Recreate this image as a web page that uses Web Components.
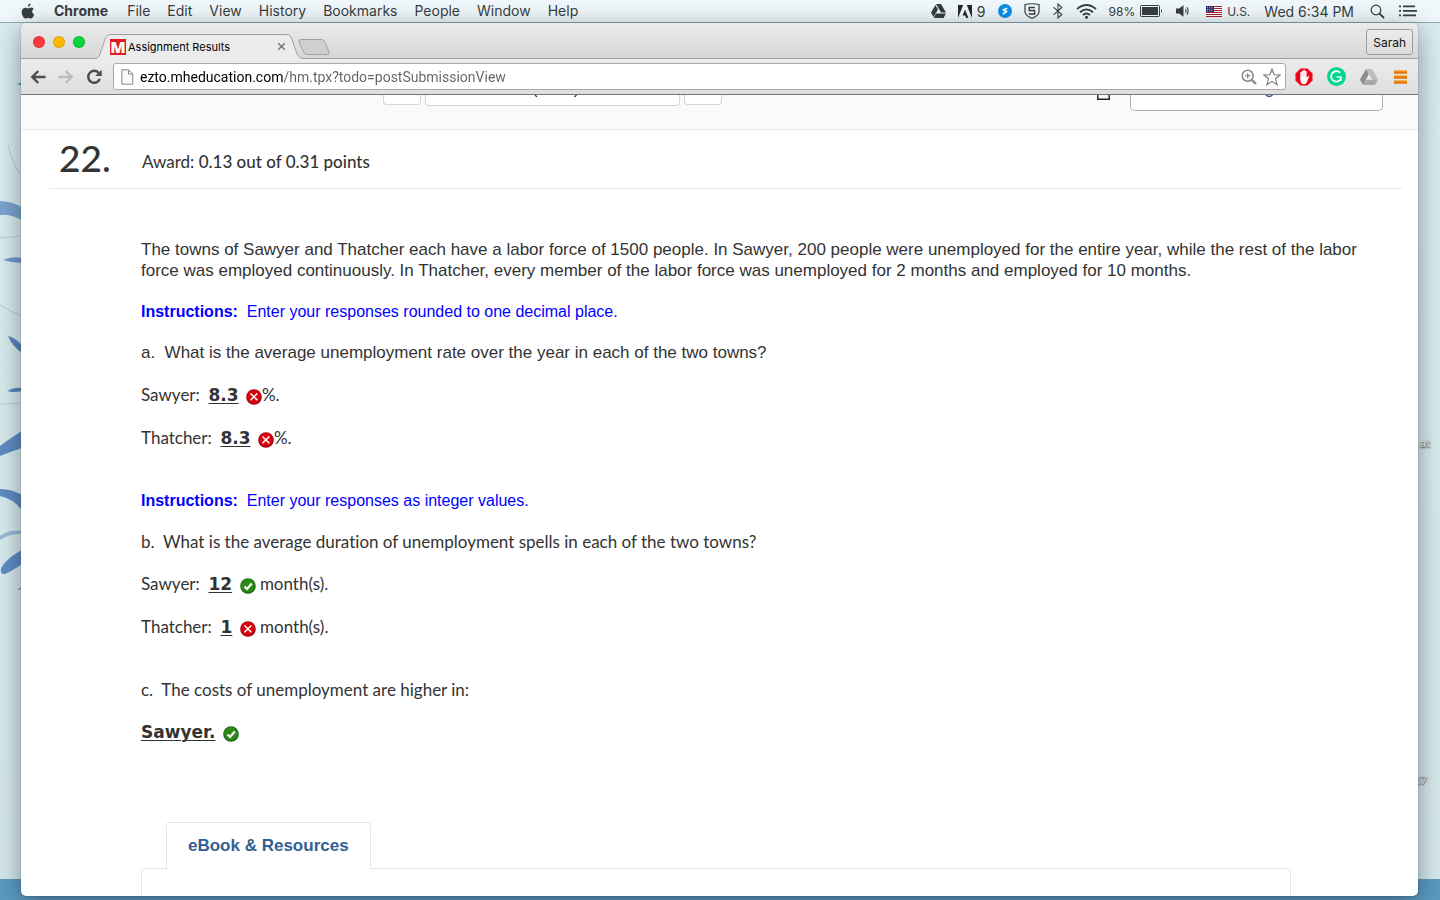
<!DOCTYPE html>
<html lang="en">
<head>
<meta charset="utf-8">
<title>Assignment Results</title>
<style>
  html, body {
    height: 100%;
    margin: 0;
  }
  body {
    overflow: hidden;
    font-family: Inter, Roboto, sans-serif;
    font-size: 14px;
    color: #2b2b2b;
  }
</style>
</head>
<body>
<desk-top>
  <menu-bar slot="menu"></menu-bar>
  <browser-window>
    <tab-strip slot="tabs" user="Sarah">Assignment Results</tab-strip>
    <tool-bar slot="toolbar" url="ezto.mheducation.com/hm.tpx?todo=postSubmissionView"></tool-bar>
    <page-header></page-header>
    <question-card number="22." points="0.13 out of 0.31 points">
      <question-text face="arial">The towns of Sawyer and Thatcher each have a labor force of 1500 people. In Sawyer, 200 people were unemployed for the entire year, while the rest of the labor force was employed continuously. In Thatcher, every member of the labor force was unemployed for 2 months and employed for 10 months.</question-text>
      <question-hint>Enter your responses rounded to one decimal place.</question-hint>
      <question-text face="arial">a.&nbsp; What is the average unemployment rate over the year in each of the two towns?</question-text>
      <answer-line label="Sawyer:" value="8.3" state="wrong">%.</answer-line>
      <answer-line label="Thatcher:" value="8.3" state="wrong" last>%.</answer-line>
      <question-hint>Enter your responses as integer values.</question-hint>
      <question-text>b.&nbsp; What is the average duration of unemployment spells in each of the two towns?</question-text>
      <answer-line label="Sawyer:" value="12" state="right">&nbsp;month(s).</answer-line>
      <answer-line label="Thatcher:" value="1" state="wrong" last>&nbsp;month(s).</answer-line>
      <question-text>c.&nbsp; The costs of unemployment are higher in:</question-text>
      <answer-line value="Sawyer." state="right"></answer-line>
    </question-card>
    <resource-tabs>eBook &amp; Resources</resource-tabs>
  </browser-window>
</desk-top>

<script>
class BaseElement extends HTMLElement {
  constructor() {
    super();
    this.shadow = this.attachShadow({ mode: 'open' });
  }

  connectedCallback() {
    const template = document.createElement('template');
    template.innerHTML = this.markup();
    this.shadow.appendChild(template.content.cloneNode(true));
  }
}

class DeskTop extends BaseElement {
  markup() {
    return `
    <style>
    :host{
        display: flex;
        flex-direction: column;
        height: 100vh;
        position: relative;
        overflow: hidden;
        background: linear-gradient(#d9eef0, #d5e8eb);
    }
    .wallpaper{
        position: absolute;
        left: 0;
        top: 0;
        width: 22px;
        height: 900px;
    }
    .sea{
        position: absolute;
        left: 0;
        right: 0;
        bottom: 0;
        height: 21px;
        background: #5b9bc1;
    }
    .label{
        position: absolute;
        left: calc(100% - 20px);
        font-size: 11px;
        line-height: 14px;
        font-weight: 600;
        color: #dedede;
        text-shadow: 0 1px 2px #444;
    }
    .at{ top: 436px; }
    .num{ top: 773px; left: calc(100% - 24px); }
    main{
        flex: 1;
        min-height: 0;
        display: flex;
        padding: 0 22px 4px 21px;
        position: relative;
    }
    ::slotted(browser-window){
        flex: 1;
    }
    </style>
    <svg class="wallpaper" viewBox="0 0 22 900" fill="#6f9bcb" aria-hidden="true">
      <path d="M0 201 Q10 201 22 207 V220 Q10 214 0 215Z" opacity=".9"/>
      <path d="M3 260 Q12 256 22 258 V263 Q12 263 3 260Z"/>
      <path d="M8 336 Q14 337 22 345 V353 Q12 346 8 336Z" fill="#5b86c1"/>
      <path d="M7 391 Q14 387 22 388 V391 Q14 393 7 391Z" fill="#5b86c1"/>
      <path d="M0 446 Q12 437 22 431 V448 Q10 452 0 456Z" fill="#5f8cc6"/>
      <path d="M0 489 Q12 489 22 495 V510 Q12 498 0 496Z" fill="#5f8cc6"/>
      <path d="M0 536 Q10 529 22 531 V534 Q10 533 0 540Z" opacity=".6"/>
      <path d="M1 568 Q8 557 22 550 V564 Q12 571 5 574 Q0 575 1 568Z" fill="#5f8cc6"/>
      <path d="M17 590 L22 586 V589Z"/>
      <path d="M17 84 L22 82 V86Z"/>
      <g fill="none" stroke="#b4cfe0"><path d="M8 145 Q13 165 20 174"/><path d="M0 305 Q12 312 22 316"/><path d="M0 238 L22 236"/><path d="M0 404 L22 403"/></g>
    </svg>
    <div class="sea"></div>
    <span class="label at">at</span>
    <span class="label num">17</span>
    <slot name="menu"></slot>
    <main><slot></slot></main>`;
  }
}

class MenuBar extends BaseElement {
  markup() {
    const items = ['File', 'Edit', 'View', 'History', 'Bookmarks', 'People', 'Window', 'Help'];
    return `
    <style>
    :host{
        display: flex;
        justify-content: space-between;
        position: relative;
        height: 22px;
        padding: 0 23px 0 21px;
        margin-bottom: 1px;
        background: #eff7fa;
        box-shadow: 0 1px 0 #8fa9b3;
        color: #373e41;
    }
    nav, .tray, .group, .right{
        display: flex;
        align-items: center;
    }
    nav{ gap: 17px; }
    .right{ gap: 14px; }
    .tray{ gap: 12px; }
    .group{ gap: 5px; }
    button{
        border: 0;
        padding: 0;
        background: none;
        font: inherit;
        line-height: 22px;
        color: inherit;
    }
    .app{
        padding: 0 2px;
        font-weight: 700;
    }
    .small{ font-size: 12px; }
    .clock{ padding-right: 2px; }
    svg{ display: block; fill: currentColor; }
    </style>
    <nav aria-label="Application menu">
      <button aria-label="Apple"><svg width="14" height="17" viewBox="0 0 14 17"><path d="M9.6.4C9.700 2 8.400 3.700 6.800 3.700 6.700 2.100 8.100.6 9.600.4Z"/><path d="M12.700 6C11.700 6.600 11.200 7.500 11.200 8.600 11.200 9.900 12 11 13.200 11.500 12.600 13.300 11.200 15.600 9.800 15.600 8.900 15.600 8.500 15 7.300 15S5.600 15.600 4.800 15.600C2.900 15.700.7 12.100.7 9.200.7 6.300 2.500 4.700 4.400 4.700 5.600 4.700 6.500 5.400 7.200 5.400 7.900 5.400 9 4.600 10.200 4.600 11.100 4.600 12.100 5.100 12.700 6Z"/></svg></button>
      <button class="app">Chrome</button>
      ${items.map((item) => `<button>${item}</button>`).join('')}
    </nav>
    <div class="right">
      <div class="tray">
        <svg width="15" height="14" viewBox="0 0 15 14"><path d="M5 0h5l5 8.500h-5zM4.400 1 7 5.500 2.600 13 0 8.800zM5.200 9.500H15L12.500 14H2.700z"/><path d="M7.500 6 9 8.600H6z" fill="#eff7fa"/></svg>
        <span class="group">
          <svg width="14" height="13" viewBox="0 0 14 13"><path d="M0 0h5.200L0 13zM8.800 0H14v13zM7 4.600 10.400 13H8.200L7.200 10.400H4.600z" fill="#23282a"/></svg>
          <span>9</span>
        </span>
        <svg width="14" height="14" viewBox="0 0 14 14"><circle cx="7" cy="7" r="7" fill="#0c8ee8"/><path d="M9.200 4.200 5.600 5.800 8.400 7.800 4.800 9.900" fill="none" stroke="#fff" stroke-width="1.700"/></svg>
        <svg width="16" height="16" viewBox="0 0 16 16"><path d="M1 1.500 Q8 0 15 1.500V9Q14.500 13 8 15.200 1.500 13 1 9Z" fill="none" stroke="currentColor" stroke-width="1.200"/><path d="M10.800 4.500H5.200V7.500H10.600V11H4.800" fill="none" stroke="currentColor" stroke-width="1.400"/></svg>
        <svg width="12" height="16" viewBox="0 0 12 16"><path d="M1.500 4.200 9.800 11.500 6 15V1L9.800 4.500 1.500 11.800" fill="none" stroke="currentColor" stroke-width="1.100"/></svg>
        <svg width="21" height="15" viewBox="0 0 21 15"><g fill="none" stroke="currentColor" stroke-width="1.800"><path d="M1 5Q10.500-3 20 5"/><path d="M4 8.200Q10.500 2.600 17 8.200"/><path d="M7 11Q10.500 8 14 11"/></g><circle cx="10.500" cy="13.300" r="1.500"/></svg>
        <span class="group"><span class="small">98%</span>
          <svg width="23" height="12" viewBox="0 0 23 12"><rect x=".5" y=".5" width="19" height="11" rx="1" fill="none" stroke="currentColor"/><rect x="2" y="2" width="16" height="8"/><path d="M21 4q2 2 0 4z"/></svg>
        </span>
        <svg width="17" height="14" viewBox="0 0 17 14"><path d="M1 4.500H4L8.500 1.300V12.700L4 9.500H1Z"/><path d="M10.500 5q1.300 2 0 4M12 3.200q2.300 3.800 0 7.600" fill="none" stroke="currentColor" stroke-width="1.100"/></svg>
      </div>
      <span class="group">
        <svg width="16" height="11" viewBox="0 0 16 11"><path fill="#fff" d="M0 0h16v11H0z"/><path fill="#a8202c" d="M0 0h16v1H0zM0 2h16v1H0zM0 4h16v1H0zM0 6h16v1H0zM0 8h16v1H0zM0 10h16v1H0z"/><path fill="#30336f" d="M0 0h8v6H0z"/><path d="M1 1.500h6M1 3.500h6M1 5h6" stroke="#c9cbe0" stroke-width=".7" stroke-dasharray="1 1"/></svg>
        <span class="small">U.S.</span>
      </span>
      <span class="clock">Wed 6:34 PM</span>
      <button aria-label="Search"><svg width="15" height="15" viewBox="0 0 15 15"><g fill="none" stroke="currentColor"><circle cx="6" cy="6" r="4.800" stroke-width="1.200"/><path d="M9.600 9.600 14 14" stroke-width="1.800"/></g></svg></button>
      <button aria-label="Notifications"><svg width="18" height="12" viewBox="0 0 18 12"><path d="M0 .5h2v1.800H0zM4 .5h12v1.800H4zM0 5h2v1.800H0zM4 5h14v1.800H4zM0 9.500h2v1.800H0zM4 9.500h13v1.800H4z"/></svg></button>
    </div>`;
  }
}

class BrowserWindow extends BaseElement {
  markup() {
    return `
    <style>
    :host{
        display: flex;
        flex-direction: column;
        min-width: 0;
        border-radius: 5px;
        overflow: hidden;
        background: #fff;
        box-shadow: 0 0 1px rgba(0,0,0,.6), 0 6px 26px rgba(0,0,0,.4);
    }
    .page{
        flex: 1;
        min-height: 0;
        overflow: hidden;
    }
    </style>
    <slot name="tabs"></slot>
    <slot name="toolbar"></slot>
    <div class="page"><slot></slot></div>`;
  }
}

class TabStrip extends BaseElement {
  markup() {
    return `
    <style>
    :host{
        display: flex;
        height: 36px;
        box-sizing: border-box;
        padding: 0 5px 0 12px;
        background: linear-gradient(#ebebeb, #d6d6d6);
        box-shadow: inset 0 -1px 0 #a0a0a0;
    }
    .lights{
        display: flex;
        align-items: center;
        gap: 8px;
        margin-right: 11px;
        height: 38px;
    }
    .lights button{
        width: 12px;
        height: 12px;
        padding: 0;
        border-radius: 50%;
        border: 1px solid rgba(0,0,0,.12);
    }
    .close{ background: #fc3840; }
    .min{ background: #fdb900; }
    .max{ background: #04d63c; }
    .tab{
        display: flex;
        align-items: center;
        gap: 2px;
        position: relative;
        width: 176px;
        height: 25px;
        margin-top: 11px;
        padding: 0 17px 0 14px;
        color: #000;
        font-size: 11px;
    }
    .tab > *{ position: relative; }
    .tab .shape{
        position: absolute;
        left: -1px;
        top: 0;
    }
    .icon{
        width: 16px;
        height: 16px;
        background: #e21c23;
        color: #fff;
        font: 800 16px/16px "Open Sans", sans-serif;
        text-align: center;
    }
    .name{ flex: 1; }
    button{
        border: 0;
        background: none;
        padding: 0;
        font: inherit;
    }
    svg{ display: block; }
    .new{
        align-self: flex-start;
        margin: 16px 0 0 -5px;
    }
    .user{
        margin: 6px 0 0 auto;
        height: 26px;
        padding: 0 6px;
        border: 1px solid #9c9c9c;
        border-radius: 3px;
        background: linear-gradient(#ececec, #dcdcdc);
        color: #111;
        font-size: 12px;
    }
    </style>
    <div class="lights">
      <button class="close" aria-label="Close"></button>
      <button class="min" aria-label="Minimize"></button>
      <button class="max" aria-label="Zoom"></button>
    </div>
    <div class="tab">
      <svg class="shape" width="209" height="25" viewBox="0 0 209 25"><path d="M0 24.500C3 24.500 4 23 5 20L10.500 4Q12 .5 15 .5H192Q195 .5 196.500 4L202 20Q204 24.500 208 24.500V25H0Z" fill="#ececec"/><path d="M0 24.500C3 24.500 4 23 5 20L10.500 4Q12 .5 15 .5H192Q195 .5 196.500 4L202 20Q204 24.500 208 24.500" fill="none" stroke="#a0a0a0"/></svg>
      <span class="icon">M</span>
      <span class="name"><slot></slot></span>
      <button aria-label="Close tab"><svg width="9" height="9" viewBox="0 0 9 9"><path d="M1.200 1.200 7.800 7.800M7.800 1.200 1.200 7.800" stroke="#777" stroke-width="1.500"/></svg></button>
    </div>
    <button class="new" aria-label="New tab"><svg width="32" height="17" viewBox="0 0 32 17"><path d="M3 .5H23Q26 .5 27 3L31 13Q32 15.500 29.500 15.500H10Q6.500 15.500 5.500 13L1 3Q.2.500 3 .5Z" fill="#cfcfcf" stroke="#a2a2a2"/></svg></button>
    <button class="user">${this.getAttribute('user')}</button>`;
  }
}

class ToolBar extends BaseElement {
  markup() {
    return `
    <style>
    :host{
        display: flex;
        align-items: center;
        height: 36px;
        box-sizing: border-box;
        padding: 0 10px 0 9px;
        background: linear-gradient(#ececec, #dedede);
        border-bottom: 1px solid #757575;
    }
    nav, .ext{
        display: flex;
        align-items: center;
        gap: 12px;
        padding-right: 11px;
    }
    .ext{
        gap: 14px;
        padding: 0 0 0 9px;
    }
    button{
        border: 0;
        background: none;
        padding: 0;
    }
    svg{ display: block; }
    .box{
        flex: 1;
        display: flex;
        align-items: center;
        gap: 6px;
        height: 25px;
        padding: 0 4px 0 7px;
        background: #fff;
        border: 1px solid #a9a9a9;
        border-radius: 3px;
    }
    /* host name in black, the path after it in grey */
    input{
        flex: 1;
        min-width: 0;
        border: 0;
        padding: 0;
        outline: 0;
        font: 14px/20px Roboto, sans-serif;
        color: #000;
        background: linear-gradient(90deg, #000 var(--host-width), #646464 var(--host-width));
        -webkit-background-clip: text;
        background-clip: text;
        -webkit-text-fill-color: transparent;
        --host-width: 144px;
    }
    </style>
    <nav>
      <button aria-label="Back"><svg width="16" height="16" viewBox="0 0 16 16"><path d="M15.500 8H2.500M8.300 2 2.300 8 8.300 14" fill="none" stroke="#4d4d4d" stroke-width="2.400"/></svg></button>
      <button aria-label="Forward"><svg width="16" height="16" viewBox="0 0 16 16"><path d="M.5 8H13.500M7.700 2 13.700 8 7.700 14" fill="none" stroke="#bcbcbc" stroke-width="2.400"/></svg></button>
      <button aria-label="Reload"><svg width="16" height="16" viewBox="0 0 16 16"><path d="M12.700 3.800A6 6 0 1 0 13.800 10" fill="none" stroke="#4d4d4d" stroke-width="2.500"/><path d="M15.700.8V7H9.200Z" fill="#4d4d4d"/></svg></button>
    </nav>
    <div class="box">
      <svg width="13" height="16" viewBox="0 0 13 16"><path d="M.8.800H7.500L11.800 5V15.200H.8Z" fill="#fafafa" stroke="#888"/><path d="M7.500.8V5H11.800" fill="none" stroke="#888"/></svg>
      <input type="text" aria-label="Address" value="${this.getAttribute('url')}">
      <button aria-label="Page zoom"><svg width="16" height="16" viewBox="0 0 16 16"><g fill="none" stroke="#8b8b8b"><circle cx="6.700" cy="6.700" r="5.500" stroke-width="1.600"/><path d="M10.800 10.800 15 15" stroke-width="2.400"/><path d="M6.700 4V9.400M4 6.700H9.400" stroke-width="1.300"/></g></svg></button>
      <button aria-label="Bookmark this page"><svg width="18" height="18" viewBox="0 0 18 18"><path d="M9 1 11.200 6.700 17.200 7 12.500 10.800 14.100 16.700 9 13.300 3.900 16.700 5.500 10.800.8 7 6.800 6.700Z" fill="#fff" stroke="#777" stroke-width="1.100"/></svg></button>
    </div>
    <div class="ext">
      <button aria-label="Ad blocker"><svg width="18" height="18" viewBox="0 0 18 18"><path d="M5.500.5H12.500L17.500 5.500V12.500L12.500 17.500H5.500L.5 12.500V5.500Z" fill="#f3001c"/><path d="M5.300 10V4.600q.8-1 1.500 0V3q.8-1 1.600 0V2.300q.8-.9 1.600 0V3.300q.8-.9 1.600 0V10l1.500-1.900q1.100-.2.900.8L11.600 14.500 10.500 16H7Q5.300 14 5.300 12Z" fill="#fff"/><path d="M6.800 4.600V8.500M8.400 3V8.500M10 3V8.500" stroke="#f4a0a8" stroke-width=".4"/></svg></button>
      <button aria-label="Grammarly"><svg width="19" height="19" viewBox="0 0 19 19"><circle cx="9.500" cy="9.500" r="9.500" fill="#07d58d"/><path d="M13 5.700A5.200 5.200 0 1 0 13.500 12.500" fill="none" stroke="#fff" stroke-width="1.700"/><path d="M9.800 10H13.800V14" fill="none" stroke="#fff" stroke-width="1.700"/></svg></button>
      <button aria-label="Google Drive"><svg width="18" height="16" viewBox="0 0 18 16"><path d="M6 0 8.900 5.200 3 16 0 10.500Z" fill="#8e8e8e"/><path d="M6 0H12L18 10.500H12Z" fill="#bdbdbd"/><path d="M6 10.500H18L15 16H3Z" fill="#a9a9a9"/><path d="M9 5.500 11.800 10.500H6.200Z" fill="#efefef"/></svg></button>
      <button aria-label="Menu"><svg width="16" height="16" viewBox="0 0 16 16"><path d="M2 1.500h13v3H2zM2 6.500h13v3H2zM2 11.500h13v3H2z" fill="#f08a00"/><path d="M2 4h13M2 9h13M2 14h13" stroke="#d6661a"/></svg></button>
    </div>`;
  }
}

class PageHeader extends BaseElement {
  markup() {
    return `
    <style>
    :host{
        display: flex;
        justify-content: space-between;
        height: 34px;
        padding: 0 35px 0 362px;
        overflow: hidden;
        background: #fafafa;
        border-bottom: 1px solid #e9e9e9;
    }
    .pager, .help{
        display: flex;
        align-items: flex-start;
        gap: 4px;
    }
    .help{ gap: 20px; }
    button{
        display: block;
        box-sizing: border-box;
        width: 38px;
        height: 10px;
        padding: 0;
        border: 1px solid #d5d5d5;
        border-top: 0;
        border-radius: 0 0 4px 4px;
        background: #fff;
    }
    .current{
        width: 255px;
        height: 11px;
    }
    .report{
        width: 253px;
        height: 16px;
        border-color: #b0b0b0;
        border-radius: 0 0 5px 5px;
    }
    svg{ display: block; }
    .current svg{ margin: 0 0 8px 108px; }
    .report svg{ margin: 0 0 12px 134px; }
    </style>
    <div class="pager">
      <button aria-label="Previous question"></button>
      <button class="current" aria-label="Choose question"><svg width="44" height="2" viewBox="0 0 44 2"><path d="M1 0 3 2M42.500 0 40.500 2" stroke="#333" stroke-width="1.300"/></svg></button>
      <button aria-label="Next question"></button>
    </div>
    <div class="help">
      <svg width="13" height="5" viewBox="0 0 13 5"><path d="M.8 0V4.200H12.200V0" fill="none" stroke="#222" stroke-width="1.500"/></svg>
      <button class="report" aria-label="Report a problem"><svg width="9" height="3" viewBox="0 0 9 3"><path d="M1 0Q4 3 7.500 0" fill="none" stroke="#2f5f9e" stroke-width="1.500"/></svg></button>
    </div>`;
  }
}

class QuestionCard extends BaseElement {
  markup() {
    return `
    <style>
    :host{
        display: block;
        margin: 0 16px 0 28px;
        font-family: Lato, sans-serif;
        font-variant-ligatures: none;
    }
    header{
        display: grid;
        grid-template-columns: 83px 1fr;
        align-items: center;
        height: 58px;
        padding-left: 10px;
        border-bottom: 1px solid #e9e9e9;
        color: #333;
    }
    h1{
        margin: 0;
        padding-bottom: 4px;
        font-size: 37px;
        font-weight: 500;
    }
    p{
        margin: 0;
        padding-top: 4px;
        font-size: 17px;
    }
    strong{ font-weight: 500; }
    .body{
        padding: 50px 8px 0 92px;
    }
    </style>
    <header>
      <h1>${this.getAttribute('number')}</h1>
      <p>Award: <strong>${this.getAttribute('points')}</strong></p>
    </header>
    <div class="body"><slot></slot></div>`;
  }
}

class QuestionText extends BaseElement {
  markup() {
    return `
    <style>
    :host{
        display: block;
        margin-bottom: 20px;
        font-size: 17px;
        line-height: 21px;
        color: #333;
    }
    :host([face="arial"]){
        font-family: "Liberation Sans", Arial, sans-serif;
    }
    </style>
    <slot></slot>`;
  }
}

class QuestionHint extends BaseElement {
  markup() {
    return `
    <style>
    :host{
        display: block;
        margin-bottom: 20px;
        font: 16px/21px "Liberation Sans", Arial, sans-serif;
        color: #00f;
    }
    </style>
    <strong>Instructions:</strong>&nbsp; <slot></slot>`;
  }
}

class AnswerMark extends BaseElement {
  markup() {
    const right = this.getAttribute('state') === 'right';
    const shape = right
      ? '<path d="M4.500 8.500 7 11 11.800 5.500" fill="none" stroke="#fff" stroke-width="2.200"/>'
      : '<path d="M4.500 4.500 11.300 11.300M11.300 4.500 4.500 11.300" stroke="#fff" stroke-width="1.500"/>';
    return `
    <style>
    :host{
        display: inline-block;
        width: 16px;
        height: 16px;
        vertical-align: -4px;
    }
    svg{ display: block; }
    </style>
    <svg width="16" height="16" viewBox="0 0 16 16" role="img" aria-label="${right ? 'correct' : 'incorrect'}">
      <circle cx="8" cy="8" r="7.800" fill="${right ? '#1d6b12' : '#a8000c'}"/>
      <circle cx="7.800" cy="7.600" r="6.700" fill="${right ? '#2b8a15' : '#d9040f'}"/>
      ${shape}
    </svg>`;
  }
}

class AnswerLine extends BaseElement {
  markup() {
    const label = this.getAttribute('label');
    return `
    <style>
    :host{
        display: block;
        margin-bottom: 20px;
        font-size: 17px;
        line-height: 23px;
        color: #333;
    }
    :host([last]){
        margin-bottom: 41px;
    }
    u{
        font-family: "DejaVu Sans", Verdana, sans-serif;
        font-size: 17px;
        font-weight: 700;
        line-height: 1;
        text-decoration-thickness: 1px;
        text-underline-offset: 2px;
        margin-right: 3px;
    }
    </style>
    ${label ? label + '&nbsp; ' : ''}<u>${this.getAttribute('value')}</u>
    <answer-mark state="${this.getAttribute('state')}"></answer-mark><slot></slot>`;
  }
}

class ResourceTabs extends BaseElement {
  markup() {
    return `
    <style>
    :host{
        display: block;
        max-width: 1150px;
        margin: 79px 127px 0 120px;
        font-family: "Liberation Sans", Arial, sans-serif;
    }
    a{
        display: block;
        position: relative;
        box-sizing: border-box;
        width: fit-content;
        height: 47px;
        margin-left: 25px;
        padding: 0 21px;
        border: 1px solid #e6e6e6;
        border-bottom: 0;
        border-radius: 4px 4px 0 0;
        background: #fff;
        color: #336094;
        font-size: 17px;
        line-height: 46px;
        font-weight: 700;
        text-decoration: none;
    }
    .panel{
        height: 120px;
        margin-top: -1px;
        border: 1px solid #e6e6e6;
        border-radius: 4px;
    }
    </style>
    <a href="#resources"><slot></slot></a>
    <div class="panel" id="resources"></div>`;
  }
}

window.customElements.define('desk-top', DeskTop);
window.customElements.define('menu-bar', MenuBar);
window.customElements.define('browser-window', BrowserWindow);
window.customElements.define('tab-strip', TabStrip);
window.customElements.define('tool-bar', ToolBar);
window.customElements.define('page-header', PageHeader);
window.customElements.define('question-card', QuestionCard);
window.customElements.define('question-text', QuestionText);
window.customElements.define('question-hint', QuestionHint);
window.customElements.define('answer-mark', AnswerMark);
window.customElements.define('answer-line', AnswerLine);
window.customElements.define('resource-tabs', ResourceTabs);
</script>
</body>
</html>
